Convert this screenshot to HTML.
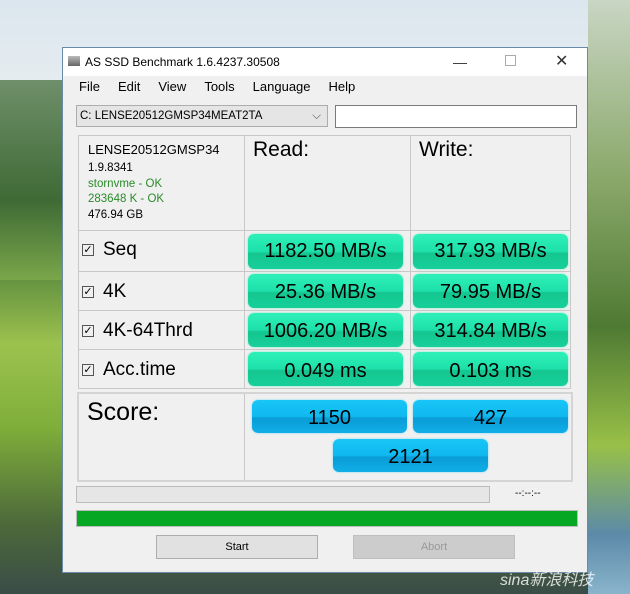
<!DOCTYPE html>
<html><head><style>
*{margin:0;padding:0;box-sizing:border-box}
body{width:630px;height:594px;overflow:hidden;position:relative;font-family:"Liberation Sans",sans-serif;
background:linear-gradient(180deg,#dbe6ee 0%,#e8eef0 18%,#7a9a68 30%,#5b8a3e 45%,#9cc24e 58%,#7fae3a 72%,#4d6a3a 88%,#3a4c48 100%);}
.bgl{position:absolute;left:0;top:80px;width:62px;height:200px;background:linear-gradient(180deg,#6f8f6a,#3f6a35 60%,#7aa64a)}
.bgr{position:absolute;left:588px;top:0;width:42px;height:594px;background:linear-gradient(180deg,#c9d6c4 0%,#8aa86a 30%,#4f7a33 55%,#98c048 75%,#5c8aa8 90%,#8ab4cc)}
.win{position:absolute;left:62px;top:47px;width:526px;height:526px;background:#f0f0f0;border:1px solid #6a8aa8}
.title{height:28px;background:#fff;font-size:12px;line-height:28px;padding-left:22px;position:relative}
.title .ic{position:absolute;left:5px;top:8px;width:12px;height:10px;background:linear-gradient(#bbb,#666)}
.ctl{position:absolute;top:0;font-size:14px;color:#333}
.menu{position:absolute;top:31px;left:16px;font-size:13px}
.menu span{margin-right:18px}
.abs{position:absolute}
.cell{position:absolute;border:1px solid #c8c8c8;background:#f0f0f0}
.g{position:absolute;border-radius:6px;background:linear-gradient(180deg,#2ef0b8 0%,#1ee0aa 50%,#14c690 55%,#18d09a 100%);font-size:20px;text-align:center;color:#000;box-shadow:0 0 2px #6fe8c8}
.b{position:absolute;border-radius:6px;background:linear-gradient(180deg,#18c6f6 0%,#10b8f0 50%,#0a9cd6 55%,#10aee8 100%);font-size:20px;text-align:center;color:#000;box-shadow:0 0 2px #7fd6f4}
.lab{position:absolute;font-size:19px}
.cb{display:inline-block;width:12px;height:12px;border:1px solid #555;font-size:11px;line-height:10px;text-align:center;margin-right:9px;vertical-align:2px}
.btn{position:absolute;border:1px solid #adadad;background:#e1e1e1;font-size:11px;text-align:center;line-height:22px}
</style></head><body>
<div class="bgl"></div><div class="bgr"></div>
<div class="win">
 <div class="title"><div class="ic"></div>AS SSD Benchmark 1.6.4237.30508
  <span class="ctl" style="left:390px">—</span><span class="ctl" style="left:442px;top:7px;width:11px;height:11px;border:1px solid #aaa"></span><span class="ctl" style="left:492px;font-size:16px">✕</span></div>
 <div class="menu"><span>File</span><span>Edit</span><span>View</span><span>Tools</span><span>Language</span><span>Help</span></div>
 <div class="abs" style="left:13px;top:57px;width:252px;height:22px;border:1px solid #adadad;background:#e5e5e5;font-size:11.5px;line-height:20px;padding-left:3px">C: LENSE20512GMSP34MEAT2TA<span style="position:absolute;right:6px;color:#555">⌵</span></div>
 <div class="abs" style="left:272px;top:57px;width:242px;height:23px;border:1px solid #7a7a7a;background:#fff"></div>

 <div class="cell" style="left:15px;top:87px;width:167px;height:96px"></div>
 <div class="cell" style="left:181px;top:87px;width:167px;height:96px"></div>
 <div class="cell" style="left:347px;top:87px;width:161px;height:96px"></div>
 <div class="abs" style="left:25px;top:93px;font-size:13px;line-height:17px">LENSE20512GMSP34</div>
 <div class="abs" style="left:25px;top:113px;font-size:11.5px;line-height:15.5px">1.9.8341<br><span style="color:#2a8a2a">stornvme - OK<br>283648 K - OK</span><br>476.94 GB</div>
 <div class="abs" style="left:190px;top:90px;font-size:21px">Read:</div>
 <div class="abs" style="left:356px;top:90px;font-size:21px">Write:</div>

 <!-- rows -->
 <div class="cell" style="left:15px;top:182px;width:167px;height:42px"></div><div class="cell" style="left:181px;top:182px;width:167px;height:42px"></div><div class="cell" style="left:347px;top:182px;width:161px;height:42px"></div>
 <div class="cell" style="left:15px;top:223px;width:167px;height:40px"></div><div class="cell" style="left:181px;top:223px;width:167px;height:40px"></div><div class="cell" style="left:347px;top:223px;width:161px;height:40px"></div>
 <div class="cell" style="left:15px;top:262px;width:167px;height:40px"></div><div class="cell" style="left:181px;top:262px;width:167px;height:40px"></div><div class="cell" style="left:347px;top:262px;width:161px;height:40px"></div>
 <div class="cell" style="left:15px;top:301px;width:167px;height:40px"></div><div class="cell" style="left:181px;top:301px;width:167px;height:40px"></div><div class="cell" style="left:347px;top:301px;width:161px;height:40px"></div>

 <div class="lab" style="left:19px;top:191px"><span class="cb">✓</span>Seq</div>
 <div class="lab" style="left:19px;top:233px"><span class="cb">✓</span>4K</div>
 <div class="lab" style="left:19px;top:272px"><span class="cb">✓</span>4K-64Thrd</div>
 <div class="lab" style="left:19px;top:311px"><span class="cb">✓</span>Acc.time</div>

 <div class="g" style="left:185px;top:186px;width:155px;height:35px;line-height:35px">1182.50 MB/s</div>
 <div class="g" style="left:350px;top:186px;width:155px;height:35px;line-height:35px">317.93 MB/s</div>
 <div class="g" style="left:185px;top:226px;width:155px;height:34px;line-height:36px">25.36 MB/s</div>
 <div class="g" style="left:350px;top:226px;width:155px;height:34px;line-height:36px">79.95 MB/s</div>
 <div class="g" style="left:185px;top:265px;width:155px;height:34px;line-height:36px">1006.20 MB/s</div>
 <div class="g" style="left:350px;top:265px;width:155px;height:34px;line-height:36px">314.84 MB/s</div>
 <div class="g" style="left:185px;top:304px;width:155px;height:34px;line-height:38px">0.049 ms</div>
 <div class="g" style="left:350px;top:304px;width:155px;height:34px;line-height:38px">0.103 ms</div>

 <div class="abs" style="left:14px;top:344px;width:496px;height:90px;border:2px solid #d4d4d4"></div>
 <div class="abs" style="left:181px;top:346px;width:1px;height:86px;background:#c8c8c8"></div>
 <div class="abs" style="left:24px;top:350px;font-size:25px">Score:</div>
 <div class="b" style="left:189px;top:352px;width:155px;height:33px;line-height:36px">1150</div>
 <div class="b" style="left:350px;top:352px;width:155px;height:33px;line-height:36px">427</div>
 <div class="b" style="left:270px;top:391px;width:155px;height:33px;line-height:36px">2121</div>

 <div class="abs" style="left:13px;top:438px;width:414px;height:17px;border:1px solid #bcbcbc;background:#e6e6e6"></div>
 <div class="abs" style="left:452px;top:440px;font-size:10px">--:--:--</div>
 <div class="abs" style="left:13px;top:462px;width:502px;height:17px;border:1px solid #bcbcbc;background:#06a823"></div>
 <div class="btn" style="left:93px;top:487px;width:162px;height:24px">Start</div>
 <div class="btn" style="left:290px;top:487px;width:162px;height:24px;background:#cccccc;color:#999;border-color:#bfbfbf">Abort</div>
</div>
<div class="abs" style="left:500px;top:566px;font-size:16px;color:rgba(255,255,255,.8);font-family:'Liberation Sans','Noto Sans CJK SC',sans-serif;font-style:italic">sina新浪科技</div>
</body></html>
